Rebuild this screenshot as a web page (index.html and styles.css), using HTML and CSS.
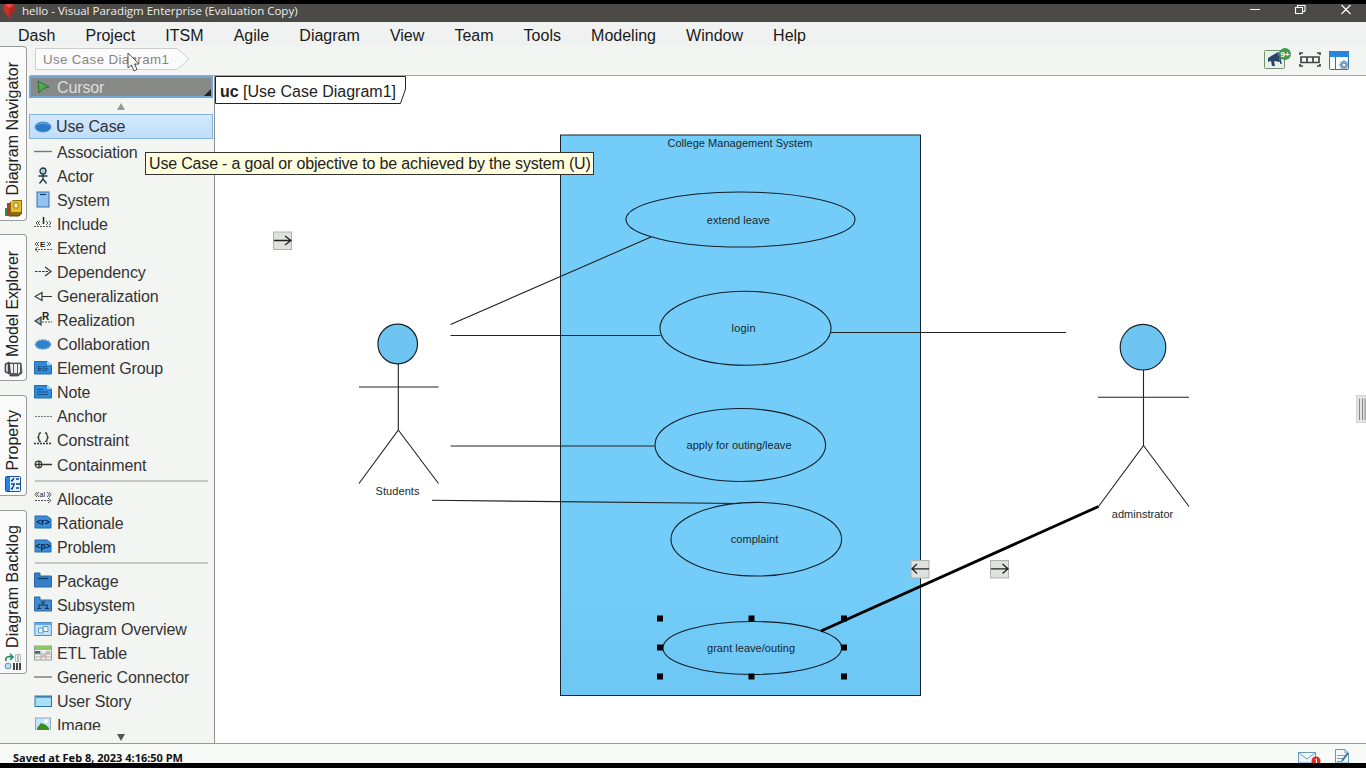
FILE: index.html
```html
<!DOCTYPE html>
<html lang="en">
<head>
<meta charset="utf-8">
<title>hello - Visual Paradigm Enterprise</title>
<link rel="stylesheet" href="styles.css">
</head>
<body>
<div class="app">
  <header class="titlebar">
    <svg class="logo" width="14" height="16" viewBox="0 0 14 16"><path d="M3 0H11L13.500 5 7 14.500.5 5Z" fill="#c9302a"/><path d="M7 6 10 3 13.500 5 7 14.500Z" fill="#a32823"/><path d="M3 0 7 4 11 0" fill="#e0544a"/></svg>
    <span class="title">hello - Visual Paradigm Enterprise (Evaluation Copy)</span>
    <svg class="winctl" width="112" height="18" viewBox="0 0 112 18" fill="none" stroke="#fff" stroke-width="1.1"><path d="M3 5.5H13M52 1.500H58V7.500M48.500 3.500H55.500V9.500H48.500ZM50.500 3.500V1.500H52M55.500 7.500H58M94.500 1 103.500 10M103.500 1 94.500 10"/></svg>
  </header>
  <nav class="menu"><span>Dash</span><span>Project</span><span>ITSM</span><span>Agile</span><span>Diagram</span><span>View</span><span>Team</span><span>Tools</span><span>Modeling</span><span>Window</span><span>Help</span></nav>
  <div class="work">
    <aside class="tabs">
      <div class="tab t1"><span>Diagram Navigator</span>
        <svg width="19" height="20" viewBox="0 0 19 20"><path d="M1 10h5v8H1Z" fill="#2d9143"/><path d="M3 5h6v12H3Z" fill="#b33a2d"/><path d="M6 4 9 2H18V15L15 18H6Z" fill="#8a6c0c"/><path d="M7 3H17V14H7Z" fill="#e7bd2d"/><path d="M10 5h4v5h-4Z" fill="#fff3b5" stroke="#80640c" stroke-width=".8"/><path d="M5 18H15L18 15" stroke="#594510" fill="none"/></svg></div>
      <div class="tab t2"><span>Model Explorer</span>
        <svg width="19" height="18" viewBox="0 0 19 18"><path d="M1 4 5 2V14L1 12ZM4 3H17L18 13 14 16H6Z" fill="#555f69" stroke="#333" stroke-width=".7"/><path d="M6 4H9V13H7ZM10 4H13V13H10ZM14 4H16V12L14 14Z" fill="#eee"/><path d="M2 5 4 4V12L2 11Z" fill="#ccc"/></svg></div>
      <div class="tab t3"><span>Property</span>
        <svg width="18" height="18" viewBox="0 0 18 18"><rect x="1.500" y="1.500" width="15" height="15" rx="1" fill="#e3f2ff" stroke="#164f9c"/><path d="M2 2H6V16H2Z" fill="#2484df"/><path d="M7 5 8 6 10 3M12 4h3M7 9h4M12 9h4M7 13l1 1 2-4M12 13h3" stroke="#153d79" stroke-width="1.400" fill="none"/></svg></div>
      <div class="tab t4"><span>Diagram Backlog</span>
        <svg width="18" height="18" viewBox="0 0 18 18"><path d="M2 8C1 4 4 3 8 4M6 1 9 4 6 7" fill="none" stroke="#218c69" stroke-width="1.700"/><circle cx="4" cy="13" r="3" fill="#b9d8ed" stroke="#6691b4"/><path d="M9 10h2v7H9ZM12 10h2v7h-2ZM15 10h2v7h-2Z" fill="#444"/><path d="M11.500 1.500h2v7h-2ZM14.500 1.500h2v7h-2Z" fill="none" stroke="#bbb"/></svg></div>
    </aside>
    <div class="main">
      <div class="crumbbar">
        <div class="crumb"><svg width="156" height="22" viewBox="0 0 156 22"><path d="M.5 .5H142L154 11 142 21.500H.5Z" fill="#fafbfa" stroke="#ccd1d0"/></svg><span>Use Case Diagram1</span></div>
        <svg class="tools" width="90" height="26" viewBox="0 0 90 26"><rect x="1.500" y="2.500" width="20" height="18" rx="1" fill="#e9efe9" stroke="#719070"/><path d="M5 10 15 4 17 14 11 13 12 18 9 18 8 13 5 14Z" fill="#28466c"/><path d="M16 4 18 16" stroke="#28466c" stroke-width="1.500"/><circle cx="22" cy="6" r="6" fill="#43984a"/><text class="badge" x="22" y="9" text-anchor="middle">9+</text>
          <g fill="none" stroke="#444" stroke-width="1.700"><path d="M37 7V5H40M54 5H57V7M37 16V18H40M54 18H57V16"/><path d="M38 9H56V14.500H38ZM44 9V14M50 9V14"/></g>
          <rect x="66.500" y="3.500" width="19" height="18" rx="1" fill="#f8fbfd" stroke="#3770ad"/><path d="M66 3h20v6H66Z" fill="#2686dc"/><path d="M72.500 9V22" stroke="#3770ad"/><circle cx="81" cy="17" r="4" fill="#90afc8"/><path d="M81 12V22M76 17H86M77.500 13.500 84.500 20.500M84.500 13.500 77.500 20.500" stroke="#6289aa"/><circle cx="81" cy="17" r="1.300" fill="#fff"/></svg>
      </div>
      <div class="body">
        <section class="palette">
          <div class="cursor-row"><svg width="16" height="16" viewBox="0 0 16 16"><path d="M2 2 13 8 7 9.500 3 14Z" fill="#4dad51" stroke="#28702e"/></svg><span>Cursor</span><i class="corner"></i></div>
          <div class="arrow up"></div>
          <div class="list">
            <div class="row selected"><svg viewBox="0 0 18 18"><ellipse cx="9" cy="9" rx="8" ry="5" fill="#2c79c8" stroke="#5b94c8"/><path d="M3 7C6 5 12 5 15 7" stroke="#65a9e4" fill="none"/></svg><span>Use Case</span></div>
            <div class="row"><svg viewBox="0 0 18 18"><path d="M0 8.500H18" stroke="#777" stroke-width="1.400"/></svg><span>Association</span></div>
            <div class="row"><svg viewBox="0 0 18 18"><g fill="none" stroke="#253440" stroke-width="1.300"><circle cx="9" cy="4" r="3" fill="#a7d4e5"/><path d="M9 7V12L5.500 16.500M9 12 12.500 16.500M4.500 9H13.500"/></g></svg><span>Actor</span></div>
            <div class="row"><svg viewBox="0 0 18 18"><rect x="3" y="1" width="12" height="15" fill="#91c4f0" stroke="#3770a9"/><path d="M6 3.500H12" stroke="#173b5c" stroke-width="1.200"/></svg><span>System</span></div>
            <div class="row"><svg viewBox="0 0 18 18"><g fill="none" stroke="#555"><path d="M4 6 2 8 4 10M6 6 4 8 6 10M12 6 14 8 12 10M15 6 17 8 15 10"/><path d="M0 11.500H17" stroke-dasharray="2 1"/><path d="M9.500 2V9" stroke="#222" stroke-width="1.500"/></g></svg><span>Include</span></div>
            <div class="row"><svg viewBox="0 0 18 18"><text class="ic" x="6" y="8">E</text><g fill="none" stroke="#555"><path d="M3 3 1 5 3 7M5 3 3 5 5 7M13 3 15 5 13 7M15 3 17 5 15 7M4 8 1 10.500 4 13"/><path d="M1 10.500H18" stroke-dasharray="2 1"/></g></svg><span>Extend</span></div>
            <div class="row"><svg viewBox="0 0 18 18"><g fill="none" stroke="#333" stroke-width="1.200"><path d="M1 8.500H14" stroke-dasharray="2.500 1"/><path d="M11 4 17 8.500 11 13"/></g></svg><span>Dependency</span></div>
            <div class="row"><svg viewBox="0 0 18 18"><path d="M8 8.500H18M8 4.500V12.500L1 8.500Z" fill="#f4f5f4" stroke="#333" stroke-width="1.200"/></svg><span>Generalization</span></div>
            <div class="row"><svg viewBox="0 0 18 18"><path d="M7 5V13L1 9Z" fill="#9ebdd1" stroke="#333" stroke-width="1.200"/><path d="M8 10H18" stroke="#555" stroke-dasharray="2 1"/><text class="ic big" x="8" y="8">R</text></svg><span>Realization</span></div>
            <div class="row"><svg viewBox="0 0 18 18"><ellipse cx="9" cy="8.500" rx="7.500" ry="4.500" fill="#2f82cc" stroke="#5c9bd0" stroke-width="1.500" stroke-dasharray="2 1"/></svg><span>Collaboration</span></div>
            <div class="row"><svg viewBox="0 0 18 18"><path d="M.5 1.500H13L17.500 5V14H.5Z" fill="#318bda" stroke="#286ba9"/><path d="M13 1V5H18" fill="#a7d4f5"/><text class="ic eg" x="3.500" y="11">EG</text></svg><span>Element Group</span></div>
            <div class="row"><svg viewBox="0 0 18 18"><path d="M.5 1.500H13L17.500 5V14H.5Z" fill="#318bda" stroke="#286ba9"/><path d="M13 1V5H18" fill="#a7d4f5"/><path d="M3 5.500H9M3 8H14M3 10.500H14" stroke="#175288"/></svg><span>Note</span></div>
            <div class="row"><svg viewBox="0 0 18 18"><path d="M1 8.500H18" stroke="#777" stroke-dasharray="2 1"/></svg><span>Anchor</span></div>
            <div class="row"><svg viewBox="0 0 18 18"><g fill="none" stroke="#333" stroke-width="1.300"><path d="M7 1H6Q5 1 5 3T3.500 5.500Q5 5.500 5 8T7 9M11 1H12Q13 1 13 3T14.500 5.500Q13 5.500 13 8T11 9"/><path d="M0 11.500H18" stroke-dasharray="2 1"/></g></svg><span>Constraint</span></div>
            <div class="row"><svg viewBox="0 0 18 18"><path d="M1 8.500H18M5 5V12" stroke="#333" stroke-width="1.300"/><circle cx="4.500" cy="8.500" r="3.300" fill="none" stroke="#333" stroke-width="1.200"/></svg><span>Containment</span></div>
            <hr>
            <div class="row"><svg viewBox="0 0 18 18"><g fill="none" stroke="#555"><path d="M3 2 1 4.500 3 7M5 2 3 4.500 5 7M13 2 15 4.500 13 7M15 2 17 4.500 15 7M14 8 17 10.500 14 13"/><path d="M1 10.500H16" stroke-dasharray="2 1"/></g><text class="ic small" x="5.500" y="7">al</text></svg><span>Allocate</span></div>
            <div class="row"><svg viewBox="0 0 18 18"><path d="M1 2H13L17 5V14H1Z" fill="#388ed8" stroke="#2869a3"/><text class="ic tag" x="9" y="10.500" text-anchor="middle">&lt;r&gt;</text></svg><span>Rationale</span></div>
            <div class="row"><svg viewBox="0 0 18 18"><path d="M1 2H13L17 5V14H1Z" fill="#388ed8" stroke="#2869a3"/><text class="ic tag" x="9" y="10.500" text-anchor="middle">&lt;p&gt;</text></svg><span>Problem</span></div>
            <hr>
            <div class="row"><svg viewBox="0 0 18 18"><path d="M.5 1H6V4H17.500V15H.5Z" fill="#357fc8" stroke="#2c69a2"/><path d="M4 6.500H14" stroke="#153c65" stroke-width="1.300"/></svg><span>Package</span></div>
            <div class="row"><svg viewBox="0 0 18 18"><path d="M.5 1H6V4H17.500V15H.5Z" fill="#418bd0" stroke="#2c69a2"/><path d="M7 6H11M9 6V9M5 12V9H13V12M3 12.500H7M11 12.500H15" fill="none" stroke="#173654" stroke-width="1.200"/></svg><span>Subsystem</span></div>
            <div class="row"><svg viewBox="0 0 18 18"><rect x=".8" y="1.500" width="16.500" height="13" fill="#c5e4fd" stroke="#4c8bc3"/><path d="M1 2h16v2H1Z" fill="#61a9e5"/><path d="M4.500 7H9V12H4.500ZM9 5.500H14V10.500H9Z" fill="#edf8ff" stroke="#6499c5"/></svg><span>Diagram Overview</span></div>
            <div class="row"><svg viewBox="0 0 18 18"><rect x=".5" y="1" width="17" height="14" fill="#f2f2f0" stroke="#9a9f99"/><path d="M1 1h16v4H1Z" fill="#8ec56b"/><path d="M1 6h5v3H1Z" fill="#446584"/><path d="M1 9H17M1 12H17M7 6V15M12 6V15" stroke="#aaa"/><path d="M8 10h3v2H8ZM13 6h3v3h-3" fill="#d9aeac"/></svg><span>ETL Table</span></div>
            <div class="row"><svg viewBox="0 0 18 18"><path d="M0 8H18" stroke="#777" stroke-width="1.400"/></svg><span>Generic Connector</span></div>
            <div class="row"><svg viewBox="0 0 18 18"><rect x="1" y="3" width="16.500" height="10.500" fill="#a8e0f4" stroke="#2c75a0"/><path d="M2 4H17" stroke="#236a99" stroke-width="1.200"/></svg><span>User Story</span></div>
            <div class="row"><svg viewBox="0 0 18 18"><rect x="1.500" y="1" width="15" height="15" fill="#c5e5ff" stroke="#97a8b4"/><path d="M3 16V11L7 6 10 7 12 8 15 11V16Z" fill="#3d8e20"/><circle cx="12" cy="4" r="2" fill="#fff"/></svg><span>Image</span></div>
          </div>
          <div class="arrow down"></div>
        </section>
        <section class="canvas">
          <svg width="1151" height="667" viewBox="215 76 1151 667">
            <path d="M215.500 76.500H405.500V89L400.500 103.500H215.500Z" fill="#fff" stroke="#222"/>
            <text class="frame" x="220" y="96.500" textLength="176"><tspan class="bold">uc</tspan> [Use Case Diagram1]</text>
            <defs><linearGradient id="sys" x1="0" y1="0" x2="0" y2="1"><stop offset="0" stop-color="#73cdf8"/><stop offset=".8" stop-color="#73cdf8"/><stop offset="1" stop-color="#6dc6f3"/></linearGradient></defs>
            <rect x="560.500" y="135" width="360" height="560.500" fill="url(#sys)" stroke="#17242c"/>
            <g fill="none" stroke="#111f29" stroke-width="1.100">
              <ellipse cx="740.500" cy="219.500" rx="114.500" ry="27.500"/>
              <ellipse cx="745.500" cy="328.300" rx="85.500" ry="37"/>
              <ellipse cx="740.300" cy="445" rx="85.300" ry="36.500"/>
              <ellipse cx="756.300" cy="539.200" rx="85.300" ry="36.800"/>
              <ellipse cx="752.300" cy="648" rx="89.300" ry="26.500"/>
            </g>
            <g fill="none" stroke="#222" stroke-width="1.100">
              <path d="M450.500 324.500 651 237M450.500 335.500H660.500M831 332.500H1066M450.500 446H655M432 500.300 740 503.500"/>
              <path d="M398.300 363V430L359 483.500M398.300 430 438.500 483.500M359 387H438.500"/>
              <path d="M1143.500 370V445.500L1098.500 506.500M1143.500 445.500 1189 506.500M1098 397.200H1189"/>
            </g>
            <circle cx="397.700" cy="344" r="19.800" fill="#6fc5f2" stroke="#17242c" stroke-width="1.200"/>
            <circle cx="1143" cy="347.200" r="22.800" fill="#6fc5f2" stroke="#17242c" stroke-width="1.200"/>
            <path d="M821 631 1098.500 506.500" stroke="#000" stroke-width="2.800"/>
            <path d="M657 615.500h6v6h-6ZM748.500 615.500h6v6h-6ZM841 615.500h6v6h-6ZM657 644.500h6v6h-6ZM841 644.500h6v6h-6ZM657 673.500h6v6h-6ZM748.500 673.500h6v6h-6ZM841 673.500h6v6h-6Z"/>
            <g class="label" text-anchor="middle">
              <text x="740" y="146.500" textLength="145">College Management System</text>
              <text x="738.300" y="223.500" textLength="63">extend leave</text>
              <text x="743.500" y="332.300" textLength="24">login</text>
              <text x="739" y="448.500" textLength="105">apply for outing/leave</text>
              <text x="754.500" y="543" textLength="47.500">complaint</text>
              <text x="751" y="651.500" textLength="88">grant leave/outing</text>
              <text x="397.500" y="495" textLength="44">Students</text>
              <text x="1142.500" y="518" textLength="61.500">adminstrator</text>
            </g>
            <g fill="#dfe1df" stroke="#aeb1ae"><rect x="273.500" y="232" width="18" height="17.500"/><rect x="911" y="560.500" width="18" height="17.500"/><rect x="990.500" y="560.500" width="18" height="17.500"/></g>
            <path d="M274 240.500H291M285 236 291 240.500 285 245M929 568.800H912M917 564 912 568.800 917 573.500M991 568.800H1008M1002.500 564 1008 568.800 1002.500 573.500" fill="none" stroke="#222" stroke-width="1.300"/>
            <path d="M1356.500 395.500H1366V422.500H1356.500Z" fill="#e3e4e3" stroke="#d2d3d2"/><path d="M1359.500 398.500V420M1362.500 398.500V420M1365 398.500V420" stroke="#858785"/>
          </svg>
        </section>
      </div>
    </div>
  </div>
  <footer class="status"><span>Saved at Feb 8, 2023 4:16:50 PM</span>
    <svg width="56" height="15" viewBox="0 0 56 15"><path d="M1.500 4.500H18.500V15H1.500ZM1.500 4.500 10 11 18.500 4.500" fill="#eaf4fa" stroke="#679bba"/><circle cx="19" cy="13" r="4.500" fill="#e12b1f"/><path d="M18 12 19.500 11V15" stroke="#fff" fill="none"/><path d="M38.500 1.500H48L51.500 5V15H38.500Z" fill="#f4f9fc" stroke="#659abb"/><path d="M48 1.500V5H51.500M40 7.500H48M40 10.500H46M40 13.500H45" stroke="#819cac" fill="none"/><path d="M51 5 45 13" stroke="#327aa7" stroke-width="2"/></svg>
  </footer>
  <div class="tooltip">Use Case - a goal or objective to be achieved by the system (U)</div>
  <svg class="pointer" width="14" height="20" viewBox="0 0 14 20"><path d="M1 1V16L4.500 13 7 19 10 17.500 7.500 12H12Z" fill="#fff" stroke="#555"/></svg>
</div>
</body>
</html>
```
FILE: styles.css
```css
* { box-sizing: border-box; }
body { margin: 0; background: #000; font: 16px/20px "Liberation Sans", Arial, sans-serif; color: #333; overflow: hidden; }
.app { position: relative; height: 768px; padding: 4px 0 5px; display: flex; flex-direction: column; }
.titlebar { height: 18px; flex: none; display: flex; align-items: flex-start; background: #4b4a46; color: #eee; padding-left: 2px; }
.logo { margin-right: 6px; flex: none; }
.title { font: 11.5px/14px "Open Sans", "Noto Sans", sans-serif; white-space: nowrap; }
.winctl { margin-left: auto; margin-right: 7px; }
.menu { height: 24px; flex: none; display: flex; gap: 30.1px; padding: 4px 18px 0; background: #f0f2f1; color: #191919; line-height: 19px; }
.work { flex: 1; min-height: 0; display: flex; background: #f3f5f3; }
.tabs { width: 30px; flex: none; display: flex; flex-direction: column; }
.tab { width: 27px; flex: none; border: 1px solid #999c9a; border-left: 0; border-radius: 0 4px 4px 0; background: #f9faf9; display: flex; flex-direction: column; align-items: center; justify-content: flex-end; gap: 3px; padding-bottom: 2px; color: #222; }
.tab span { writing-mode: vertical-rl; transform: rotate(180deg); white-space: nowrap; line-height: 20px; }
.tab svg { flex: none; }
.t1 { height: 175px; margin-bottom: 13px; }
.t2 { height: 147px; margin-bottom: 14px; letter-spacing: -.12px; }
.t3 { height: 101px; margin-bottom: 14px; gap: 5px; }
.t4 { height: 164px; gap: 5px; letter-spacing: .07px; }
.main { flex: 1; min-width: 0; display: flex; flex-direction: column; }
.crumbbar { height: 30px; flex: none; display: flex; justify-content: space-between; align-items: flex-start; padding: 2px 13px 0 5px; border-bottom: 1px solid #a5a8a6; }
.crumb { display: grid; width: 156px; }
.crumb > * { grid-area: 1 / 1; }
.crumb span { font-size: 13.3px; letter-spacing: .38px; line-height: 22px; padding: 1px 0 0 8px; color: #858585; white-space: nowrap; }
.badge { font: bold 8px "Liberation Sans", sans-serif; fill: #fff; }
.body { flex: 1; min-height: 0; display: flex; }
.palette { width: 186px; flex: none; margin-left: -1px; display: flex; flex-direction: column; border-right: 1px solid #8c8f8d; letter-spacing: -.12px; }
.cursor-row { position: relative; height: 22px; flex: none; width: 184px; display: flex; align-items: center; gap: 5px; padding-left: 5px; background: #878987; border: 2px solid #75a5d5; color: #dedede; }
.cursor-row span { padding-top: 1px; }
.corner { position: absolute; right: 0; bottom: 0; border-left: 7px solid transparent; border-bottom: 7px solid #222; }
.arrow { width: 0; height: 0; flex: none; border-left: 4.5px solid transparent; border-right: 4.5px solid transparent; margin-left: 88px; }
.up { border-bottom: 7px solid #999; margin-top: 5px; margin-bottom: 4px; }
.down { border-top: 7px solid #555; margin-top: 4px; }
.list { height: 616px; flex: none; overflow: hidden; }
.row { height: 24.08px; display: flex; align-items: center; gap: 5px; padding-left: 5px; white-space: nowrap; }
.row svg { width: 18px; height: 18px; flex: none; }
.row span { padding-top: 1px; }
.selected { width: 184px; height: 25px; margin-bottom: 1px; background: linear-gradient(#d3e8fd, #bfdefa); border: 1px solid #85b4e3; padding-left: 4px; gap: 4px; }
hr { width: 173px; height: 2px; margin: 3px 0 5px 6px; border: 0; background: #c3c6c4; }
.ic { font: bold 8px "Liberation Sans", sans-serif; letter-spacing: 0; fill: #222; }
.big { font-size: 10px; }
.eg { font-size: 7px; fill: #174875; }
.small { font-size: 7px; font-weight: normal; }
.tag { font-size: 8.5px; fill: #0b1f33; }
.canvas { flex: 1; min-width: 0; background: #fff; }
.canvas svg { display: block; }
.frame { font: 16px "Liberation Sans", Arial, sans-serif; fill: #222; }
.bold { font-weight: bold; }
.label { font: 11px "Liberation Sans", Arial, sans-serif; fill: #182830; }
.status { height: 20px; flex: none; overflow: hidden; background: #f8faf8; border-top: 1px solid #969a97; display: flex; justify-content: space-between; padding: 4px 13px 0 13px; font: bold 11px/20px "Noto Sans", "Open Sans", sans-serif; color: #111; }
.tooltip { position: absolute; left: 145px; top: 152px; width: 449px; height: 23px; padding-left: 3px; background: #ffffdf; border: 1px solid #333; line-height: 22px; letter-spacing: -.175px; white-space: nowrap; color: #222; }
.pointer { position: absolute; left: 127px; top: 52px; }
```
